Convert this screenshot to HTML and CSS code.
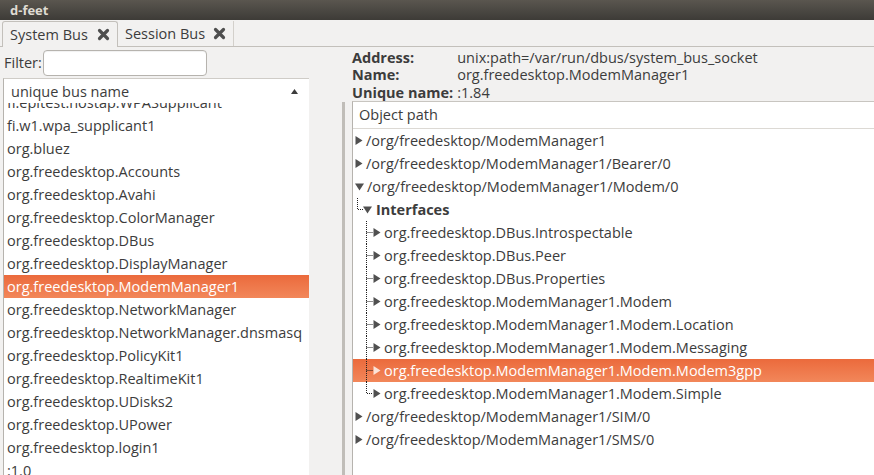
FILE: index.html
```html
<!DOCTYPE html>
<html>
<head>
<meta charset="utf-8">
<title>d-feet</title>
<link rel="stylesheet" href="styles.css">
</head>
<body>
<div class="window">
  <div class="titlebar">d-feet</div>
  <div class="tabs">
    <div class="tab active">
      <span class="tab-label">System Bus</span>
      <svg class="close" width="13" height="13" viewBox="0 0 13 13"><path d="M2.5 2.5 L10.5 10.5 M10.5 2.5 L2.5 10.5" stroke="#4e4e4e" stroke-width="3.2" stroke-linecap="round"/></svg>
    </div>
    <div class="tab">
      <span class="tab-label">Session Bus</span>
      <svg class="close" width="13" height="13" viewBox="0 0 13 13"><path d="M2.5 2.5 L10.5 10.5 M10.5 2.5 L2.5 10.5" stroke="#4e4e4e" stroke-width="3.2" stroke-linecap="round"/></svg>
    </div>
  </div>
  <div class="main">
    <div class="left">
      <div class="filter">
        <span class="filter-label">Filter:</span>
        <div class="filter-input"></div>
      </div>
      <div class="listwrap">
        <div class="list">
          <div class="list-header">
            <span>unique bus name</span>
            <svg class="sort" width="7" height="5" viewBox="0 0 7 5"><polygon points="0,5 3.5,0 7,5" fill="#3c3c3c"/></svg>
          </div>
          <div class="list-body">
            <div class="list-inner">
              <div class="lrow">fi.epitest.hostap.WPASupplicant</div>
              <div class="lrow">fi.w1.wpa_supplicant1</div>
              <div class="lrow">org.bluez</div>
              <div class="lrow">org.freedesktop.Accounts</div>
              <div class="lrow">org.freedesktop.Avahi</div>
              <div class="lrow">org.freedesktop.ColorManager</div>
              <div class="lrow">org.freedesktop.DBus</div>
              <div class="lrow">org.freedesktop.DisplayManager</div>
              <div class="lrow selected">org.freedesktop.ModemManager1</div>
              <div class="lrow">org.freedesktop.NetworkManager</div>
              <div class="lrow">org.freedesktop.NetworkManager.dnsmasq</div>
              <div class="lrow">org.freedesktop.PolicyKit1</div>
              <div class="lrow">org.freedesktop.RealtimeKit1</div>
              <div class="lrow">org.freedesktop.UDisks2</div>
              <div class="lrow">org.freedesktop.UPower</div>
              <div class="lrow">org.freedesktop.login1</div>
              <div class="lrow">:1.0</div>
            </div>
          </div>
        </div>
        <div class="gutter"></div>
        <div class="scrollbar"><div class="thumb"></div></div>
      </div>
    </div>
    <div class="right">
      <div class="info">
        <span class="info-label">Address:</span><span class="info-value">unix:path=/var/run/dbus/system_bus_socket</span>
        <span class="info-label">Name:</span><span class="info-value">org.freedesktop.ModemManager1</span>
        <span class="info-label">Unique name:</span><span class="info-value">:1.84</span>
      </div>
      <div class="tree">
        <div class="tree-header">Object path</div>
        <div class="tree-body">
          <div class="trow l0">
            <svg class="tri" width="8" height="9" viewBox="0 0 8 9"><polygon points="0.5,0 7.5,4.5 0.5,9" fill="#505050"/></svg>
            <span>/org/freedesktop/ModemManager1</span>
          </div>
          <div class="trow l0">
            <svg class="tri" width="8" height="9" viewBox="0 0 8 9"><polygon points="0.5,0 7.5,4.5 0.5,9" fill="#505050"/></svg>
            <span>/org/freedesktop/ModemManager1/Bearer/0</span>
          </div>
          <div class="trow l0">
            <svg class="tri-down" width="9" height="8" viewBox="0 0 9 8"><polygon points="0,0.5 9,0.5 4.5,7.5" fill="#505050"/></svg>
            <span>/org/freedesktop/ModemManager1/Modem/0</span>
          </div>
          <div class="trow l1">
            <svg class="guide" width="10" height="23" viewBox="0 0 10 23"><path d="M4.5 0 V11.5 H10" stroke="#222" stroke-width="1" stroke-dasharray="1 1" fill="none"/></svg>
            <svg class="tri-down" width="9" height="8" viewBox="0 0 9 8"><polygon points="0,0.5 9,0.5 4.5,7.5" fill="#505050"/></svg>
            <span class="bold">Interfaces</span>
          </div>
          <div class="trow l2">
            <svg class="guide" width="20" height="23" viewBox="0 0 20 23"><path d="M13.5 0 V23 M13.5 11.5 H20" stroke="#222" stroke-width="1" stroke-dasharray="1 1" fill="none"/></svg>
            <svg class="tri" width="8" height="9" viewBox="0 0 8 9"><polygon points="0.5,0 7.5,4.5 0.5,9" fill="#505050"/></svg>
            <span>org.freedesktop.DBus.Introspectable</span>
          </div>
          <div class="trow l2">
            <svg class="guide" width="20" height="23" viewBox="0 0 20 23"><path d="M13.5 0 V23 M13.5 11.5 H20" stroke="#222" stroke-width="1" stroke-dasharray="1 1" fill="none"/></svg>
            <svg class="tri" width="8" height="9" viewBox="0 0 8 9"><polygon points="0.5,0 7.5,4.5 0.5,9" fill="#505050"/></svg>
            <span>org.freedesktop.DBus.Peer</span>
          </div>
          <div class="trow l2">
            <svg class="guide" width="20" height="23" viewBox="0 0 20 23"><path d="M13.5 0 V23 M13.5 11.5 H20" stroke="#222" stroke-width="1" stroke-dasharray="1 1" fill="none"/></svg>
            <svg class="tri" width="8" height="9" viewBox="0 0 8 9"><polygon points="0.5,0 7.5,4.5 0.5,9" fill="#505050"/></svg>
            <span>org.freedesktop.DBus.Properties</span>
          </div>
          <div class="trow l2">
            <svg class="guide" width="20" height="23" viewBox="0 0 20 23"><path d="M13.5 0 V23 M13.5 11.5 H20" stroke="#222" stroke-width="1" stroke-dasharray="1 1" fill="none"/></svg>
            <svg class="tri" width="8" height="9" viewBox="0 0 8 9"><polygon points="0.5,0 7.5,4.5 0.5,9" fill="#505050"/></svg>
            <span>org.freedesktop.ModemManager1.Modem</span>
          </div>
          <div class="trow l2">
            <svg class="guide" width="20" height="23" viewBox="0 0 20 23"><path d="M13.5 0 V23 M13.5 11.5 H20" stroke="#222" stroke-width="1" stroke-dasharray="1 1" fill="none"/></svg>
            <svg class="tri" width="8" height="9" viewBox="0 0 8 9"><polygon points="0.5,0 7.5,4.5 0.5,9" fill="#505050"/></svg>
            <span>org.freedesktop.ModemManager1.Modem.Location</span>
          </div>
          <div class="trow l2">
            <svg class="guide" width="20" height="23" viewBox="0 0 20 23"><path d="M13.5 0 V23 M13.5 11.5 H20" stroke="#222" stroke-width="1" stroke-dasharray="1 1" fill="none"/></svg>
            <svg class="tri" width="8" height="9" viewBox="0 0 8 9"><polygon points="0.5,0 7.5,4.5 0.5,9" fill="#505050"/></svg>
            <span>org.freedesktop.ModemManager1.Modem.Messaging</span>
          </div>
          <div class="trow l2 selected">
            <svg class="guide" width="20" height="23" viewBox="0 0 20 23"><path d="M13.5 0 V23 M13.5 11.5 H20" stroke="#222" stroke-width="1" stroke-dasharray="1 1" fill="none"/></svg>
            <svg class="tri" width="8" height="9" viewBox="0 0 8 9"><polygon points="0.5,0 7.5,4.5 0.5,9" fill="#fbe3d8"/></svg>
            <span>org.freedesktop.ModemManager1.Modem.Modem3gpp</span>
          </div>
          <div class="trow l2">
            <svg class="guide" width="20" height="23" viewBox="0 0 20 23"><path d="M13.5 0 V11.5 H20" stroke="#222" stroke-width="1" stroke-dasharray="1 1" fill="none"/></svg>
            <svg class="tri" width="8" height="9" viewBox="0 0 8 9"><polygon points="0.5,0 7.5,4.5 0.5,9" fill="#505050"/></svg>
            <span>org.freedesktop.ModemManager1.Modem.Simple</span>
          </div>
          <div class="trow l0">
            <svg class="tri" width="8" height="9" viewBox="0 0 8 9"><polygon points="0.5,0 7.5,4.5 0.5,9" fill="#505050"/></svg>
            <span>/org/freedesktop/ModemManager1/SIM/0</span>
          </div>
          <div class="trow l0">
            <svg class="tri" width="8" height="9" viewBox="0 0 8 9"><polygon points="0.5,0 7.5,4.5 0.5,9" fill="#505050"/></svg>
            <span>/org/freedesktop/ModemManager1/SMS/0</span>
          </div>
        </div>
      </div>
    </div>
  </div>
</div>
</body>
</html>
```

FILE: styles.css
```css
* { box-sizing: border-box; }
html, body {
  margin: 0;
  padding: 0;
  width: 874px;
  height: 475px;
  overflow: hidden;
  background: #f2f1f0;
}
body {
  font-family: "Open Sans", "DejaVu Sans", sans-serif;
  font-size: 14.5px;
  color: #3c3c3c;
}
.window {
  display: flex;
  flex-direction: column;
  height: 475px;
}
.titlebar {
  height: 20px;
  flex: none;
  background: linear-gradient(#5a564f, #3d3b37);
  color: #dfdbd2;
  font-weight: bold;
  font-size: 13px;
  line-height: 20px;
  padding-left: 10px;
}
.tabs {
  height: 27px;
  flex: none;
  display: flex;
  align-items: flex-end;
  padding-left: 2px;
  border-bottom: 1px solid #c3c0bb;
}
.tab {
  display: flex;
  align-items: center;
  white-space: nowrap;
  border-right: 1px solid #d3d0cb;
}
.tab.active {
  border: 1px solid #c3c0bb;
  border-bottom: none;
  border-radius: 3px 3px 0 0;
  background: #f2f1f0;
  margin-bottom: -1px;
  height: 26px;
  width: 116px;
  padding-left: 7px;
  gap: 9px;
}
.tab:not(.active) {
  width: 116px;
  padding-left: 7px;
  height: 25px;
  gap: 8px;
}
.tab-label { font-size: 14.5px; }
.close { flex: none; }

.main {
  flex: 1;
  display: flex;
  min-height: 0;
}
.left {
  width: 352px;
  flex: none;
  display: flex;
  flex-direction: column;
}
.filter {
  height: 31px;
  flex: none;
  display: flex;
  align-items: center;
  padding-left: 4px;
  gap: 1px;
}
.filter-input {
  width: 164px;
  height: 26px;
  background: #fff;
  border: 1px solid #b6b3ae;
  border-radius: 4px;
  box-shadow: inset 0 1px 1px rgba(0,0,0,0.06);
}
.listwrap {
  flex: 1;
  display: flex;
  min-height: 0;
}
.list {
  margin-left: 3px;
  width: 306px;
  flex: none;
  display: flex;
  flex-direction: column;
  border-left: 1px solid #b6b3ae;
  border-top: 1px solid #cfccc7;
  background: #fff;
  min-height: 0;
}
.list-header {
  height: 24px;
  flex: none;
  display: flex;
  align-items: center;
  justify-content: space-between;
  padding: 0 11px 0 7px;
  background: #fff;
}
.list-body {
  flex: 1;
  overflow: hidden;
  min-height: 0;
}
.list-inner {
  margin-top: -12px;
}
.lrow {
  height: 23px;
  line-height: 23px;
  padding-left: 3px;
  white-space: nowrap;
}
.lrow.selected, .trow.selected {
  background: linear-gradient(#eb6a3c, #f2875a);
  color: #fff;
}
.gutter {
  width: 33px;
  flex: none;
}
.scrollbar {
  width: 4px;
  flex: none;
  padding-top: 24px;
}
.thumb {
  height: 100%;
  background: #c0bdb8;
  width: 3px;
}

.right {
  flex: 1;
  display: flex;
  flex-direction: column;
  min-width: 0;
}
.info {
  flex: none;
  height: 54px;
  padding-top: 2px;
  display: grid;
  grid-template-columns: max-content 1fr;
  column-gap: 4px;
  line-height: 17px;
}
.info-label { font-weight: bold; white-space: nowrap; }
.info-value { white-space: nowrap; }
.tree {
  flex: 1;
  border-left: 1px solid #b6b3ae;
  border-top: 1px solid #c8c5c0;
  background: #fff;
  display: flex;
  flex-direction: column;
  min-height: 0;
}
.tree-header {
  height: 27px;
  flex: none;
  line-height: 26px;
  padding-left: 6px;
  border-bottom: 1px solid #dcd9d4;
}
.tree-body {
  flex: 1;
  overflow: hidden;
}
.trow {
  height: 23px;
  display: flex;
  align-items: center;
  white-space: nowrap;
}
.trow.l0 { padding-left: 2px; gap: 3px; }
.trow.l1 .tri-down { margin-right: 4px; }
.trow.l2 .tri { margin-right: 3px; }
.bold { font-weight: bold; }
.guide { flex: none; }
.tri, .tri-down { flex: none; }
```
